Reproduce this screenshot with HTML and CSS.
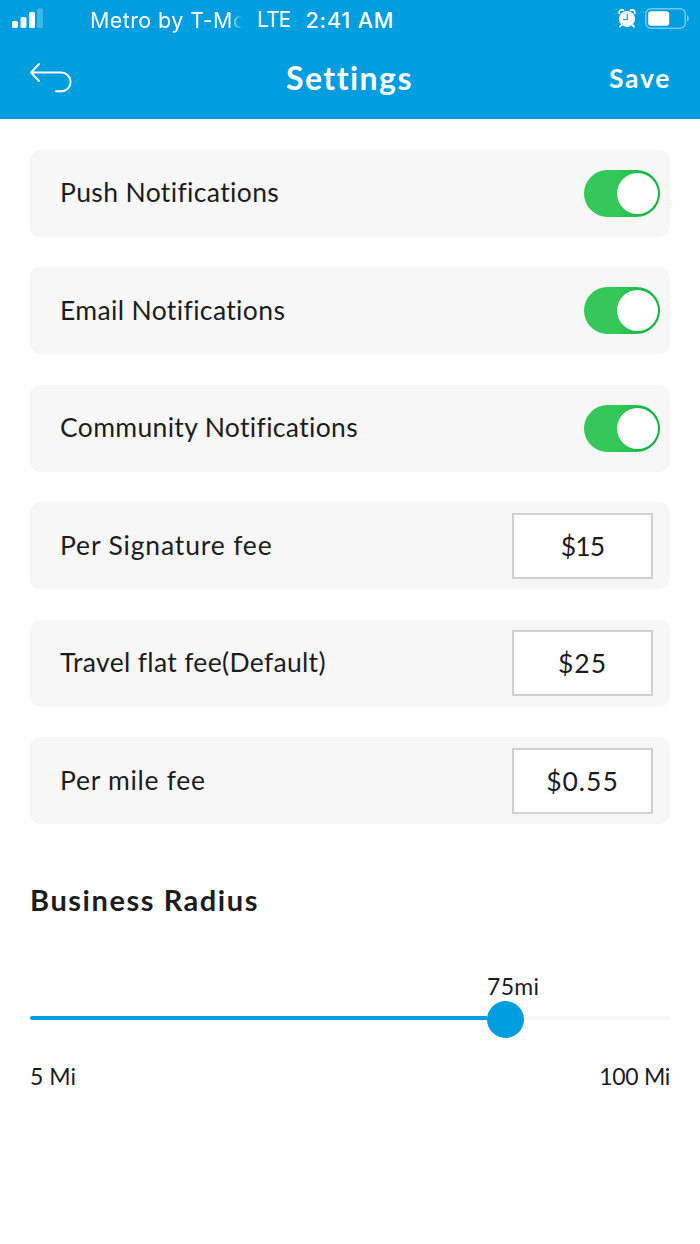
FILE: index.html
```html
<!DOCTYPE html>
<html lang="en">
<head>
<meta charset="utf-8">
<title>Settings</title>
<link rel="stylesheet" href="styles.css">
</head>
<body>
<header class="header">
  <div class="status">
    <svg class="signal" width="31" height="20" viewBox="0 0 31 20" fill="#fff">
      <rect x="0" y="13" width="6" height="7" rx="1.6"/>
      <rect x="8.5" y="9" width="6" height="11" rx="1.6"/>
      <rect x="17" y="4" width="6" height="16" rx="1.6"/>
      <rect x="25" y="0.5" width="6" height="19.5" rx="1.6" opacity=".25"/>
    </svg>
    <span class="carrier">Metro by T-Mo</span>
    <span class="network">LTE</span>
    <span class="clock">2:41 AM</span>
    <svg class="alarm" width="18" height="19" viewBox="0 0 18 19">
      <circle cx="9" cy="9.9" r="8" fill="#fff"/>
      <path d="M1.3 4.3C.6 1.8 3 .2 5.4 1.2M16.7 4.3C17.4 1.8 15 .2 12.6 1.2" fill="none" stroke="#fff" stroke-width="1.8" stroke-linecap="round"/>
      <path d="M4 15.5L2 17.6M14 15.5L16 17.6" stroke="#fff" stroke-width="1.8" stroke-linecap="round"/>
      <path d="M9.3 5V10.5H5" fill="none" stroke="#009ddf" stroke-width="1.2"/>
    </svg>
    <svg class="battery" width="44" height="21" viewBox="0 0 44 21">
      <rect x=".8" y=".8" width="39.4" height="19.4" rx="5" fill="none" stroke="#fff" stroke-opacity=".45" stroke-width="1.5"/>
      <rect x="3.2" y="3.2" width="21" height="14.6" rx="2.8" fill="#fff"/>
      <path d="M42 7.2C44.3 8.3 44.3 12.7 42 13.8Z" fill="#fff" fill-opacity=".5"/>
    </svg>
  </div>
  <nav class="navbar">
    <svg class="back" width="44" height="32" viewBox="0 0 44 32" fill="none" stroke="#fff" stroke-width="1.9" stroke-linecap="round" stroke-linejoin="round">
      <path d="M10 2L2 10.5L10 19M2 10.5H32.2A9.4 9.4 0 0 1 32.2 29.3H27"/>
    </svg>
    <h1 class="title">Settings</h1>
    <span class="save">Save</span>
  </nav>
</header>
<main class="content">
  <section class="rows">
    <div class="row"><span class="label push">Push Notifications</span><span class="toggle"><i class="knob"></i></span></div>
    <div class="row"><span class="label email">Email Notifications</span><span class="toggle"><i class="knob"></i></span></div>
    <div class="row"><span class="label community">Community Notifications</span><span class="toggle"><i class="knob"></i></span></div>
    <div class="row"><span class="label signature">Per Signature fee</span><span class="field narrow">$15</span></div>
    <div class="row"><span class="label travel">Travel flat fee(Default)</span><span class="field">$25</span></div>
    <div class="row"><span class="label mile">Per mile fee</span><span class="field">$0.55</span></div>
  </section>
  <h2 class="heading">Business Radius</h2>
  <div class="slider">
    <span class="value">75mi</span>
    <div class="track"><div class="fill"></div><div class="thumb"></div><div class="rest"></div></div>
    <div class="limits"><span class="min">5 Mi</span><span class="max">100 Mi</span></div>
  </div>
</main>
</body>
</html>
```
FILE: styles.css
```css
* { box-sizing: border-box; }
body {
  margin: 0;
  min-height: 1244px;
  background: #fff;
  color: #1c1c1e;
  font-family: Lato, "Open Sans", sans-serif;
  font-variant-ligatures: none;
}
h1, h2 { margin: 0; }
.header { height: 119.4px; background: #009ddf; color: #fff; }
.status {
  display: flex;
  height: 38px;
  padding-left: 12px;
  font: 400 21.5px/40px Inter, sans-serif;
  white-space: nowrap;
}
.signal { margin-top: 8.4px; }
.carrier {
  width: 153px;
  margin-left: 47px;
  letter-spacing: .4px;
  -webkit-mask-image: linear-gradient(90deg, #000 138px, transparent 152px);
  mask-image: linear-gradient(90deg, #000 138px, transparent 152px);
}
.network { width: 48.5px; margin-left: 14px; font-size: 21px; letter-spacing: -.9px; }
.clock { width: 312.5px; font-weight: 500; letter-spacing: .85px; }
.alarm { margin-top: 9.2px; }
.battery { margin: 8.2px 0 0 8.5px; }
.navbar { display: flex; height: 81px; padding: 0 30px; line-height: 80px; }
.back { margin: 24px 0 0 -1px; }
.title { width: 130px; margin-left: 213px; font-size: 32px; font-weight: 700; letter-spacing: 1.45px; line-height: 79px; white-space: nowrap; }
.save { margin: 0 -1px 0 auto; font-size: 26.5px; font-weight: 700; letter-spacing: 1.7px; }
.content { padding: 30.2px 30px 0; }
.rows { display: grid; gap: 30.5px; }
.row {
  display: flex;
  align-items: center;
  justify-content: space-between;
  height: 87px;
  padding: 0 10px 0 30px;
  border-radius: 10px;
  background: #f7f7f7;
}
.label { padding-bottom: 1.7px; font-size: 26.5px; line-height: 40px; white-space: nowrap; }
.push, .email { letter-spacing: .37px; }
.community { letter-spacing: .34px; }
.signature { letter-spacing: .84px; }
.travel { letter-spacing: .33px; }
.mile { letter-spacing: .72px; }
.toggle {
  display: flex;
  justify-content: flex-end;
  width: 76px;
  height: 47px;
  padding: 3px 2px;
  border-radius: 24px;
  background: linear-gradient(90deg, #35c759 45%, #10b53f 85%);
}
.knob { width: 41px; height: 41px; border-radius: 50%; background: #fff; }
.field {
  width: 141px;
  height: 66px;
  margin-right: 7px;
  border: 2px solid #d0d0d0;
  background: #fff;
  font-size: 26.5px;
  letter-spacing: 1px;
  line-height: 62px;
  text-align: center;
}
.narrow { letter-spacing: -.8px; }
.heading { margin-top: 56.4px; font-size: 29px; font-weight: 700; letter-spacing: 1.55px; line-height: 40px; white-space: nowrap; }
.slider { margin-top: 51px; font-size: 23px; line-height: 30px; }
.value { display: block; width: 60px; margin-left: 457px; letter-spacing: .3px; }
.track { display: flex; align-items: center; height: 37px; }
.fill { width: 457px; height: 4px; margin-bottom: 3px; border-radius: 2px 0 0 2px; background: #009ddf; }
.thumb { width: 37px; height: 37px; border-radius: 50%; background: #009ddf; }
.rest { flex: 1; height: 4px; margin-bottom: 3px; background: #f7f7f7; }
.limits { display: flex; justify-content: space-between; margin-top: 23px; }
.max { letter-spacing: -.3px; }
```
